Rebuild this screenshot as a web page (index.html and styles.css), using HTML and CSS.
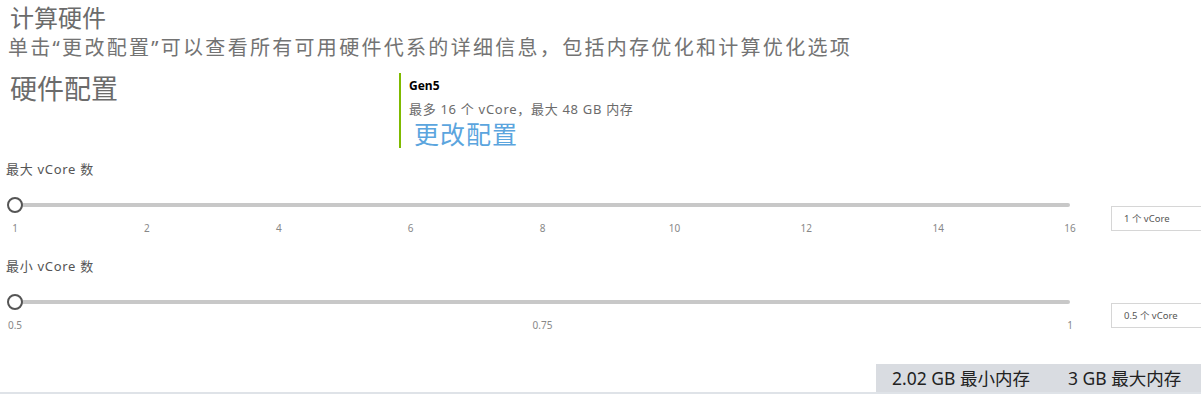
FILE: index.html
```html
<!DOCTYPE html>
<html lang="zh-CN">
<head>
<meta charset="utf-8">
<title>计算硬件</title>
<link rel="stylesheet" href="styles.css">
</head>
<body>
<div class="page">
  <h1 class="title">计算硬件</h1>
  <p class="subtitle">单击“更改配置”可以查看所有可用硬件代系的详细信息，包括内存优化和计算优化选项</p>

  <div class="hw-row">
    <h2 class="hw-heading">硬件配置</h2>
    <div class="hw-card">
      <div class="hw-gen">Gen5</div>
      <div class="hw-desc">最多 16 个 vCore，最大 48 GB 内存</div>
      <a class="hw-link" href="#">更改配置</a>
    </div>
  </div>

  <div class="slider-block">
    <div class="slider-label">最大 vCore 数</div>
    <div class="slider-row">
      <div class="slider">
        <div class="track-area">
          <div class="track"></div>
          <div class="thumb"></div>
        </div>
        <div class="ticks">
          <span class="tick"><span>1</span></span>
          <span class="tick"><span>2</span></span>
          <span class="tick"><span>4</span></span>
          <span class="tick"><span>6</span></span>
          <span class="tick"><span>8</span></span>
          <span class="tick"><span>10</span></span>
          <span class="tick"><span>12</span></span>
          <span class="tick"><span>14</span></span>
          <span class="tick"><span>16</span></span>
        </div>
      </div>
      <div class="value-box">1 个 vCore</div>
    </div>
  </div>

  <div class="slider-block">
    <div class="slider-label">最小 vCore 数</div>
    <div class="slider-row">
      <div class="slider">
        <div class="track-area">
          <div class="track"></div>
          <div class="thumb"></div>
        </div>
        <div class="ticks">
          <span class="tick"><span>0.5</span></span>
          <span class="tick"><span>0.75</span></span>
          <span class="tick"><span>1</span></span>
        </div>
      </div>
      <div class="value-box">0.5 个 vCore</div>
    </div>
  </div>

  <div class="footer">
    <div class="summary">
      <span class="sum-item">2.02 GB 最小内存</span>
      <span class="sum-item">3 GB 最大内存</span>
    </div>
  </div>
</div>
</body>
</html>
```

FILE: styles.css
```css
* {
  box-sizing: border-box;
}

html, body {
  margin: 0;
  padding: 0;
  background: #ffffff;
}

body {
  font-family: "Noto Sans", "Noto Sans CJK SC", sans-serif;
  color: #666666;
  width: 1201px;
  height: 394px;
  overflow: hidden;
}

.page {
  display: flex;
  flex-direction: column;
  height: 394px;
  overflow: hidden;
}

.title {
  margin: 2px 0 0 0;
  padding-left: 10px;
  font-size: 24px;
  line-height: 32px;
  font-weight: 400;
  color: #6b6b6b;
}

.subtitle {
  margin: 1px 0 0 0;
  padding-left: 8px;
  font-size: 20px;
  line-height: 26px;
  letter-spacing: 2.3px;
  color: #737373;
  white-space: nowrap;
}

.hw-row {
  display: flex;
  margin-top: 12px;
}

.hw-heading {
  margin: 0;
  width: 399px;
  padding-left: 10px;
  font-size: 27px;
  line-height: 32px;
  font-weight: 400;
  color: #6b6b6b;
}

.hw-card {
  display: flex;
  flex-direction: column;
  border-left: 2px solid #7fba00;
  padding: 4px 0 0 8px;
  height: 75px;
}

.hw-gen {
  font-size: 12px;
  line-height: 18px;
  font-weight: 700;
  color: #000000;
}

.hw-desc {
  margin-top: 5px;
  font-size: 13px;
  line-height: 18px;
  letter-spacing: 0.7px;
  color: #6b6b6b;
  white-space: nowrap;
}

.hw-link {
  margin-top: 2px;
  padding-left: 5px;
  font-size: 25px;
  line-height: 28px;
  letter-spacing: 1px;
  color: #5ba5de;
  text-decoration: none;
}

.slider-block {
  margin-top: 9px;
  height: 88px;
  display: flex;
  flex-direction: column;
}

.slider-label {
  padding-left: 6px;
  font-size: 13px;
  line-height: 24px;
  letter-spacing: 0.7px;
  height: 32px;
  color: #555555;
  white-space: nowrap;
}

.slider-row {
  display: flex;
  align-items: flex-start;
}

.slider {
  flex: none;
  width: 1085px;
  padding-left: 15px;
  padding-right: 15px;
}

.track-area {
  position: relative;
  height: 32px;
  display: flex;
  align-items: center;
}

.track {
  flex: 1;
  height: 4px;
  background: #c8c8c8;
  border-radius: 2px;
}

.thumb {
  position: absolute;
  left: -8px;
  top: 8px;
  width: 16px;
  height: 16px;
  border-radius: 50%;
  border: 2px solid #555555;
  background: #ffffff;
}

.ticks {
  display: flex;
  justify-content: space-between;
  height: 14px;
  font-size: 10px;
  line-height: 14px;
  color: #888888;
}

.tick {
  width: 0;
  display: flex;
  justify-content: center;
  white-space: nowrap;
}

.value-box {
  flex: none;
  margin-top: 17px;
  margin-left: 26px;
  width: 120px;
  height: 25px;
  border: 1px solid #d6d6d6;
  padding-left: 12px;
  font-size: 9.5px;
  line-height: 23px;
  color: #555555;
  white-space: nowrap;
}

.footer {
  margin-top: auto;
  border-bottom: 2px solid #dfe3e8;
  display: flex;
  justify-content: flex-end;
}

.summary {
  width: 325px;
  height: 28px;
  background: #d9dce1;
  display: flex;
  align-items: center;
  gap: 38px;
  padding-left: 16px;
  font-size: 17.5px;
  line-height: 28px;
  color: #222222;
  white-space: nowrap;
}
```
